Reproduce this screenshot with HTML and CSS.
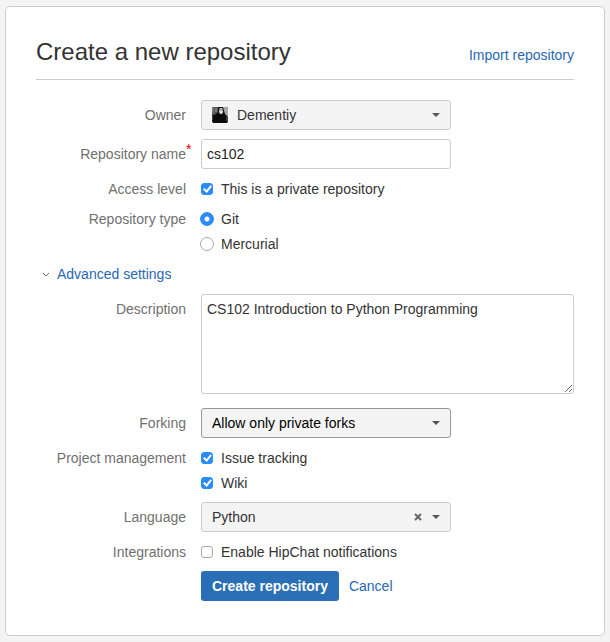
FILE: index.html
```html
<!DOCTYPE html>
<html lang="en">
<head>
<meta charset="utf-8">
<title>Create a new repository</title>
<link rel="stylesheet" href="styles.css">
</head>
<body>
<main class="card">
  <header class="card-header">
    <h1>Create a new repository</h1>
    <a href="#">Import repository</a>
  </header>
  <form>
    <div class="field">
      <label class="label" for="owner">Owner</label>
      <div class="select">
        <select id="owner" class="with-avatar"><option>Dementiy</option></select>
        <svg class="avatar" viewBox="0 0 16 16" aria-hidden="true">
          <rect width="16" height="16" rx="2" fill="#161616"/>
          <path d="M0 2q0-2 2-2h4v5L3 8H0z" fill="#555"/>
          <path d="M1 1v5M4 1v4" stroke="#999"/>
          <path d="M11 0h3q2 0 2 2v8l-3-3z" fill="#aaa"/>
          <ellipse cx="9" cy="4" rx="2" ry="3" fill="#ddd"/>
          <path d="M7 3h4" stroke="#666"/>
          <path d="M1 16V9l5-3 3 2 4-1 2 4v5z" fill="#0c0c0c"/>
          <path d="M0 9v4M15 10v4" stroke="#777"/>
        </svg>
        <svg class="caret" viewBox="0 0 8 4" aria-hidden="true"><path d="M0 0h8L4 4z"/></svg>
      </div>
    </div>
    <div class="field">
      <label class="label" for="name">Repository name<span class="required">*</span></label>
      <input class="text" id="name" type="text" value="cs102">
    </div>
    <div class="field choices" role="group" aria-labelledby="access">
      <span class="label" id="access">Access level</span>
      <div class="options">
        <label><input type="checkbox" checked>This is a private repository</label>
      </div>
    </div>
    <div class="field choices" role="radiogroup" aria-labelledby="type">
      <span class="label" id="type">Repository type</span>
      <div class="options">
        <label><input type="radio" name="scm" checked>Git</label>
        <label><input type="radio" name="scm">Mercurial</label>
      </div>
    </div>
    <a class="advanced" href="#">
      <svg viewBox="0 0 8 5" aria-hidden="true"><path d="M1 1l3 3 3-3"/></svg>
      Advanced settings
    </a>
    <div class="field description">
      <label class="label" for="description">Description</label>
      <textarea id="description">CS102 Introduction to Python Programming</textarea>
    </div>
    <div class="field forking">
      <label class="label" for="forking">Forking</label>
      <div class="select">
        <select id="forking" class="active"><option>Allow only private forks</option></select>
        <svg class="caret" viewBox="0 0 8 4" aria-hidden="true"><path d="M0 0h8L4 4z"/></svg>
      </div>
    </div>
    <div class="field choices" role="group" aria-labelledby="management">
      <span class="label" id="management">Project management</span>
      <div class="options">
        <label><input type="checkbox" checked>Issue tracking</label>
        <label><input type="checkbox" checked>Wiki</label>
      </div>
    </div>
    <div class="field">
      <label class="label" for="language">Language</label>
      <div class="select">
        <select id="language"><option>Python</option></select>
        <button class="clear" type="button" aria-label="Clear language">
          <svg viewBox="0 0 8 8" aria-hidden="true"><path d="M1 1l6 6M7 1L1 7"/></svg>
        </button>
        <svg class="caret" viewBox="0 0 8 4" aria-hidden="true"><path d="M0 0h8L4 4z"/></svg>
      </div>
    </div>
    <div class="field choices" role="group" aria-labelledby="integrations">
      <span class="label" id="integrations">Integrations</span>
      <div class="options">
        <label><input type="checkbox">Enable HipChat notifications</label>
      </div>
    </div>
    <div class="field">
      <div class="actions">
        <button class="primary" type="submit">Create repository</button>
        <a href="#">Cancel</a>
      </div>
    </div>
  </form>
</main>
</body>
</html>
```
FILE: styles.css
```css
* {
  box-sizing: border-box;
}

body {
  margin: 6px 5px;
  background: #f4f4f4;
  color: #333;
  font: 14px/20px "Liberation Sans", Arial, sans-serif;
}

a {
  color: #2868b2;
  text-decoration: none;
}

.card {
  padding: 30px 30px 34px;
  background: #fff;
  border: 1px solid #ccc;
  border-radius: 5px;
}

.card-header {
  display: flex;
  align-items: center;
  justify-content: space-between;
  padding-bottom: 12px;
  margin-bottom: 20px;
  border-bottom: 1px solid #ccc;
}

.card-header a {
  padding-top: 6px;
}

h1 {
  margin: 0;
  font-size: 24px;
  font-weight: 400;
  line-height: 30px;
}

.field {
  display: grid;
  grid-template-columns: 150px 1fr;
  column-gap: 15px;
  margin-top: 9px;
}

.label {
  color: #707070;
  line-height: 30px;
  position: relative;
  justify-self: end;
}

.required {
  position: absolute;
  left: 100%;
  top: -5px;
  color: #e00000;
}

.choices,
.description {
  margin-top: 10px;
}

.choices .label {
  line-height: 20px;
}

.forking {
  margin-top: 14px;
}

.select {
  position: relative;
  max-width: 250px;
}

select,
.text,
textarea {
  display: block;
  width: 100%;
  height: 30px;
  margin: 0;
  padding: 0 5px;
  border: 1px solid #ccc;
  border-radius: 3px;
  background: #fff;
  color: #333;
  font: inherit;
}

.text {
  max-width: 250px;
  color: #222;
}

select {
  appearance: none;
  padding: 0 30px 0 10px;
  background: #f4f4f4;
}

select.with-avatar {
  padding-left: 35px;
}

select.active {
  border-color: #999;
  color: #000;
}

textarea {
  height: 100px;
  padding: 4px 5px;
  resize: both;
}

.avatar {
  position: absolute;
  left: 11px;
  top: 7px;
  width: 16px;
  height: 16px;
}

.caret {
  position: absolute;
  right: 11px;
  top: 13px;
  width: 8px;
  height: 4px;
  fill: #555;
  pointer-events: none;
}

.clear {
  position: absolute;
  right: 29px;
  top: 11px;
  display: flex;
  padding: 0;
  border: 0;
  background: none;
}

.clear svg {
  width: 8px;
  height: 8px;
  stroke: #666;
  stroke-width: 2;
}

.options {
  display: grid;
  gap: 5px;
}

.options label {
  display: flex;
  align-items: center;
  gap: 8px;
}

input[type="checkbox"],
input[type="radio"] {
  appearance: none;
  flex: none;
  width: 12px;
  height: 12px;
  margin: 0;
  border: 1px solid #aaa;
  border-radius: 3px;
  background: #fff;
}

input[type="radio"] {
  width: 14px;
  height: 14px;
  margin: 0 -1px;
  border-radius: 50%;
}

input[type="checkbox"]:checked {
  display: grid;
  place-items: center;
  border-color: #2a8bfa;
  background: #2a8bfa;
}

input[type="checkbox"]:checked::before {
  content: "";
  box-sizing: border-box;
  width: 5px;
  height: 8px;
  margin-bottom: 2px;
  border: solid #fff;
  border-width: 0 2px 2px 0;
  transform: rotate(40deg);
}

input[type="radio"]:checked {
  border-color: #2a8bfa;
  background: radial-gradient(circle, #fff 0 2px, #2a8bfa 3px);
}

.advanced {
  display: flex;
  align-items: center;
  gap: 7px;
  margin: 10px 0 0 6px;
}

.advanced svg {
  width: 8px;
  height: 5px;
  fill: none;
  stroke: #666;
}

.actions {
  grid-column: 2;
  display: flex;
  align-items: center;
  gap: 10px;
}

.primary {
  height: 30px;
  padding: 0 11px;
  border: 0;
  border-radius: 3px;
  background: #2a6fb5;
  color: #fff;
  font: inherit;
  font-weight: 700;
}
```
